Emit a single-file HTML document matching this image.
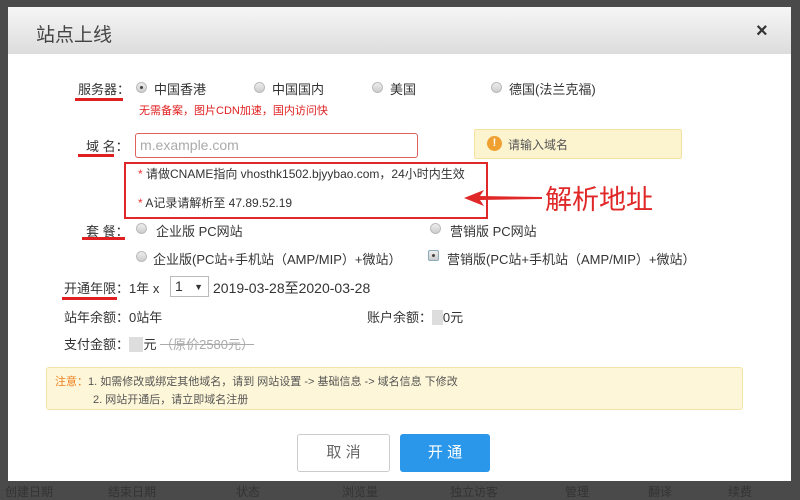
<!DOCTYPE html>
<html><head><meta charset="utf-8"><style>
*{margin:0;padding:0;box-sizing:border-box}
body{width:800px;height:493px;background:#4a4a4a;position:relative;overflow:hidden;font-family:"Liberation Sans","Noto Sans CJK SC",sans-serif;font-size:13px;color:#333}
.a{position:absolute;white-space:nowrap}
#dlg{position:absolute;left:8px;top:7px;width:783px;height:474px;background:#fff}
#hd{position:absolute;left:8px;top:7px;width:783px;height:47px;background:linear-gradient(#f6f6f6,#dcdcdc)}
.r{position:absolute;width:11px;height:11px;border-radius:50%;border:1px solid #bbb;background:linear-gradient(#eee,#ccc)}
.r.on::after{content:"";position:absolute;left:3px;top:3px;width:3px;height:3px;border-radius:50%;background:#444}
.ul{position:absolute;height:3px;background:#e02020}
.bot{position:absolute;top:483px;font-size:12px;color:#333}
</style></head><body>
<div id="dlg"></div><div id="hd"></div>
<div class="a" style="left:36px;top:20px;font-size:19px;color:#444">站点上线</div>
<div class="a" style="left:756px;top:20px;font-size:20px;color:#333;font-weight:bold">×</div>

<div class="a" style="left:78px;top:79px">服务器：</div><div class="ul" style="left:75px;top:98px;width:48px"></div>
<div class="r on" style="left:136px;top:82px"></div><div class="a" style="left:154px;top:79px">中国香港</div>
<div class="r" style="left:254px;top:82px"></div><div class="a" style="left:272px;top:79px">中国国内</div>
<div class="r" style="left:372px;top:82px"></div><div class="a" style="left:390px;top:79px">美国</div>
<div class="r" style="left:491px;top:82px"></div><div class="a" style="left:509px;top:79px">德国(法兰克福)</div>
<div class="a" style="left:139px;top:102px;font-size:11px;color:#e02020">无需备案，图片CDN加速，国内访问快</div>

<div class="a" style="left:86px;top:136px">域 名：</div><div class="ul" style="left:78px;top:154px;width:36px"></div>
<div class="a" style="left:135px;top:133px;width:283px;height:25px;border:1px solid #e06060;border-radius:3px;color:#aaa;font-size:14px;padding:3px 4px">m.example.com</div>
<div class="a" style="left:474px;top:129px;width:208px;height:30px;background:#fcf3cf;border:1px solid #f3e2a0;border-radius:2px"></div>
<div class="a" style="left:487px;top:136px;width:15px;height:15px;border-radius:50%;background:#f0a030;color:#fff;font-size:11px;text-align:center;line-height:15px;font-weight:bold">!</div>
<div class="a" style="left:508px;top:136px;font-size:12px;color:#555">请输入域名</div>

<div class="a" style="left:124px;top:162px;width:364px;height:57px;border:2px solid #e02828"></div>
<div class="a" style="left:138px;top:165px;font-size:12px"><span style="color:#e33">*</span> 请做CNAME指向 vhosthk1502.bjyybao.com，24小时内生效</div>
<div class="a" style="left:138px;top:194px;font-size:12px"><span style="color:#e33">*</span> A记录请解析至 47.89.52.19</div>
<svg class="a" style="left:462px;top:188px" width="85" height="20"><polygon points="2,10 22,2 18,8 80,9 80,11 18,12 22,18" fill="#e02828"/></svg>
<div class="a" style="left:545px;top:178px;font-size:27px;color:#e02828">解析地址</div>

<div class="a" style="left:86px;top:221px">套 餐：</div><div class="ul" style="left:82px;top:237px;width:43px"></div>
<div class="r" style="left:136px;top:223px"></div><div class="a" style="left:156px;top:221px">企业版 PC网站</div>
<div class="r" style="left:430px;top:223px"></div><div class="a" style="left:450px;top:221px">营销版 PC网站</div>
<div class="r" style="left:136px;top:251px"></div><div class="a" style="left:153px;top:249px">企业版(PC站+手机站（AMP/MIP）+微站）</div>
<div class="r on" style="left:428px;top:250px;border-radius:2px;border-color:#8ab"></div><div class="a" style="left:447px;top:249px">营销版(PC站+手机站（AMP/MIP）+微站）</div>

<div class="a" style="left:64px;top:278px">开通年限：1年 x</div><div class="ul" style="left:62px;top:297px;width:55px"></div>
<div class="a" style="left:170px;top:276px;width:39px;height:21px;border:1px solid #bbb;font-size:14px;padding:1px 4px">1<span style="font-size:9px;position:absolute;right:5px;top:5px">▼</span></div>
<div class="a" style="left:213px;top:278px;font-size:14px">2019-03-28至2020-03-28</div>
<div class="a" style="left:64px;top:307px">站年余额：0站年</div>
<div class="a" style="left:367px;top:307px">账户余额：<span style="background:#ddd;color:#ddd">&nbsp;&nbsp;&nbsp;</span>0元</div>
<div class="a" style="left:64px;top:334px">支付金额：<span style="background:#ddd;color:#ddd">&nbsp;&nbsp;&nbsp;&nbsp;</span>元 <span style="color:#aaa;text-decoration:line-through">（原价2580元）</span></div>

<div class="a" style="left:46px;top:367px;width:697px;height:43px;background:#fdf6d8;border:1px solid #f3e4a8;border-radius:3px"></div>
<div class="a" style="left:55px;top:373px;font-size:11px;color:#555"><span style="color:#f08020">注意：</span>1. 如需修改或绑定其他域名，请到 网站设置 -&gt; 基础信息 -&gt; 域名信息 下修改</div>
<div class="a" style="left:93px;top:391px;font-size:11px;color:#555">2. 网站开通后，请立即域名注册</div>

<div class="a" style="left:297px;top:434px;width:93px;height:38px;border:1px solid #ccc;border-radius:3px;text-align:center;line-height:36px;font-size:15px;color:#666">取 消</div>
<div class="a" style="left:400px;top:434px;width:90px;height:38px;background:#2b97ea;border-radius:3px;text-align:center;line-height:38px;font-size:15px;color:#fff">开 通</div>

<div class="bot" style="left:5px">创建日期</div><div class="bot" style="left:108px">结束日期</div><div class="bot" style="left:236px">状态</div><div class="bot" style="left:342px">浏览量</div><div class="bot" style="left:450px">独立访客</div><div class="bot" style="left:565px">管理</div><div class="bot" style="left:648px">翻译</div><div class="bot" style="left:728px">续费</div>
</body></html>
